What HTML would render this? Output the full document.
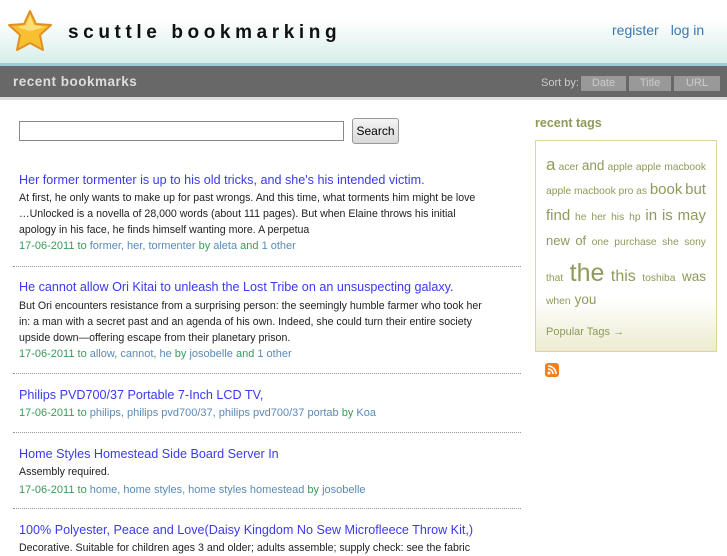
<!DOCTYPE html>
<html><head><style>
body{margin:0;width:727px;height:545px;overflow:hidden;background:#fff;font-family:"Liberation Sans",sans-serif;position:relative}
.hdr{position:absolute;left:0;top:0;width:727px;height:63px;background:linear-gradient(#fff 0%,#fff 30%,#d6eeea 100%)}
.bl{position:absolute;left:0;top:63px;width:727px;height:3px;background:#9fcbd9}
.bar{position:absolute;left:0;top:66px;width:727px;height:31px;background:#686868}
.bar2{position:absolute;left:0;top:97px;width:727px;height:3px;background:#ddd}
.t{position:absolute;white-space:nowrap}
.a{color:#3a3aee}
.d{color:#222;font-size:10.6px;line-height:16px}
.m{color:#3a9a5a;font-size:11px}
.m span{color:#5a8ab8}
.sep{position:absolute;left:13px;width:508px;border-top:1px dotted #999}
.sb{position:absolute;top:76px;height:15px;background:#999;color:#ccc;font-size:11px;text-align:center;line-height:15px}
.tags{position:absolute;left:535px;top:140px;width:182px;height:212px;border:1px solid #d8d8a0;box-sizing:border-box;background:linear-gradient(#fff 0%,#fff 75%,#ecebd0 100%)}
.tg{color:#8f9a5a;font-size:10.3px;padding:14px 10px 0 10px}
.ln{display:flex;justify-content:space-between;align-items:baseline;height:26px}
.ln.l{justify-content:flex-start;gap:4px}
</style></head><body>
<div class="hdr"></div><div class="bl"></div><div class="bar"></div><div class="bar2"></div>
<svg style="position:absolute;left:7px;top:9px" width="46" height="44" viewBox="0 0 46 44"><path d="M23 2 L29 15 L44 16 L33 26 L36 41 L23 34 L10 41 L13 26 L2 16 L17 15 Z" fill="#f8c030" stroke="#e09020" stroke-width="2" stroke-linejoin="round"/><path d="M23 6 L27 16 L38 18 L23 22 L10 18 L19 16Z" fill="#fde68a" opacity=".8"/></svg>
<div class="t" style="left:68px;top:22px;font-size:19px;font-weight:bold;letter-spacing:4.6px;color:#111">scuttle bookmarking</div>
<div class="t" style="left:612px;top:22px;font-size:14px;color:#3a78b0">register<span style="margin-left:12px">log in</span></div>
<div class="t" style="left:13px;top:74px;font-size:13.5px;font-weight:bold;color:#ddd;letter-spacing:.5px">recent bookmarks</div>
<div class="t" style="left:541px;top:77px;font-size:11px;color:#ccc">Sort by:</div>
<div class="sb" style="left:581px;width:45px">Date</div>
<div class="sb" style="left:629px;width:42px">Title</div>
<div class="sb" style="left:674px;width:46px">URL</div>
<div style="position:absolute;left:19px;top:121px;width:323px;height:18px;border:1px solid #888"></div>
<div style="position:absolute;left:352px;top:118px;width:45px;height:24px;border:1px solid #999;border-radius:3px;background:linear-gradient(#f4f4f4,#d8d8d8);font-size:12px;text-align:center;line-height:24px">Search</div>

<div class="t a" style="left:19px;top:173px;font-size:12.6px">Her former tormenter is up to his old tricks, and she's his intended victim.</div>
<div class="t d" style="left:19px;top:190px">At first, he only wants to make up for past wrongs. And this time, what torments him might be love<br>…Unlocked is a novella of 28,000 words (about 111 pages). But when Elaine throws his initial<br>apology in his face, he finds himself wanting more. A perpetua</div>
<div class="t m" style="left:19px;top:240px">17-06-2011 to <span>former, her, tormenter</span> by <span>aleta</span> and <span>1 other</span></div>
<div class="sep" style="top:266px"></div>
<div class="t a" style="left:19px;top:280px;font-size:12.6px">He cannot allow Ori Kitai to unleash the Lost Tribe on an unsuspecting galaxy.</div>
<div class="t d" style="left:19px;top:298px">But Ori encounters resistance from a surprising person: the seemingly humble farmer who took her<br>in: a man with a secret past and an agenda of his own. Indeed, she could turn their entire society<br>upside down—offering escape from their planetary prison.</div>
<div class="t m" style="left:19px;top:348px">17-06-2011 to <span>allow</span>, <span>cannot</span>, <span>he</span> by <span>josobelle</span> and <span>1 other</span></div>
<div class="sep" style="top:373px"></div>
<div class="t a" style="left:19px;top:388px;font-size:12.6px">Philips PVD700/37 Portable 7-Inch LCD TV,</div>
<div class="t m" style="left:19px;top:407px">17-06-2011 to <span>philips, philips pvd700/37, philips pvd700/37 portab</span> by <span>Koa</span></div>
<div class="sep" style="top:432px"></div>
<div class="t a" style="left:19px;top:447px;font-size:12.6px">Home Styles Homestead Side Board Server In</div>
<div class="t d" style="left:19px;top:464px">Assembly required.</div>
<div class="t m" style="left:19px;top:484px">17-06-2011 to <span>home, home styles, home styles homestead</span> by <span>josobelle</span></div>
<div class="sep" style="top:508px"></div>
<div class="t a" style="left:19px;top:523px;font-size:12.6px">100% Polyester, Peace and Love(Daisy Kingdom No Sew Microfleece Throw Kit,)</div>
<div class="t d" style="left:19px;top:540px">Decorative. Suitable for children ages 3 and older; adults assemble; supply check: see the fabric</div>

<div class="t" style="left:535px;top:116px;font-size:12.5px;font-weight:bold;color:#8f9a5a">recent tags</div>
<div class="tags"><div class="tg">
<div class="ln"><span style="font-size:17px">a</span><span>acer</span><span style="font-size:13.5px">and</span><span>apple</span><span>apple</span><span>macbook</span></div>
<div class="ln"><span>apple</span><span>macbook</span><span>pro</span><span>as</span><span style="font-size:15px">book</span><span style="font-size:15px">but</span></div>
<div class="ln"><span style="font-size:15px">find</span><span>he</span><span>her</span><span>his</span><span>hp</span><span style="font-size:15px">in</span><span style="font-size:15px">is</span><span style="font-size:15px">may</span></div>
<div class="ln"><span style="font-size:13px">new</span><span style="font-size:13px">of</span><span>one</span><span>purchase</span><span>she</span><span>sony</span></div>
<div class="ln" style="height:33px"><span>that</span><span style="font-size:25px">the</span><span style="font-size:16px">this</span><span>toshiba</span><span style="font-size:13.5px">was</span></div>
<div class="ln l"><span>when</span><span style="font-size:13.5px">you</span></div>
</div>
<div style="position:absolute;left:10px;top:185px;font-size:11px;color:#8f9a5a">Popular Tags →</div></div>
<div style="position:absolute;left:545px;top:363px;width:14px;height:14px;border-radius:3px;background:#f08020"><svg width="14" height="14"><circle cx="4" cy="10" r="1.5" fill="#fff"/><path d="M3 6a5 5 0 0 1 5 5M3 3a8 8 0 0 1 8 8" stroke="#fff" stroke-width="1.6" fill="none"/></svg></div>
</body></html>
